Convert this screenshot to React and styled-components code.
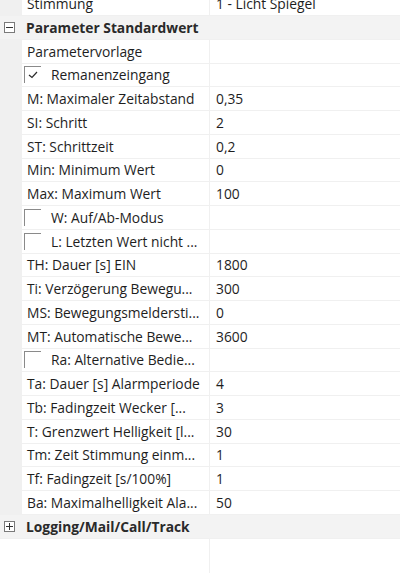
import React from 'react'
import styled, { createGlobalStyle } from 'styled-components'

const GlobalStyle = createGlobalStyle`
  html, body {
    margin: 0;
    padding: 0;
    background: #fff;
  }
  body {
    font-family: "Open Sans", "Noto Sans", sans-serif;
    font-size: 13.8px;
    color: #1e1e1e;
  }
`

const rows = [
  { name: 'Stimmung', value: '1 - Licht Spiegel' },
  { group: 'Parameter Standardwert', open: true },
  { name: 'Parametervorlage', value: '' },
  { name: 'Remanenzeingang', check: true, checked: true },
  { name: 'M: Maximaler Zeitabstand', value: '0,35' },
  { name: 'SI: Schritt', value: '2' },
  { name: 'ST: Schrittzeit', value: '0,2' },
  { name: 'Min: Minimum Wert', value: '0' },
  { name: 'Max: Maximum Wert', value: '100' },
  { name: 'W: Auf/Ab-Modus', check: true },
  { name: 'L: Letzten Wert nicht ...', check: true },
  { name: 'TH: Dauer [s] EIN', value: '1800' },
  { name: 'Ti: Verzögerung Bewegu...', value: '300' },
  { name: 'MS: Bewegungsmeldersti...', value: '0' },
  { name: 'MT: Automatische Bewe...', value: '3600' },
  { name: 'Ra: Alternative Bedie...', check: true },
  { name: 'Ta: Dauer [s] Alarmperiode', value: '4' },
  { name: 'Tb: Fadingzeit Wecker [...', value: '3' },
  { name: 'T: Grenzwert Helligkeit [l...', value: '30' },
  { name: 'Tm: Zeit Stimmung einm...', value: '1' },
  { name: 'Tf: Fadingzeit [s/100%]', value: '1' },
  { name: 'Ba: Maximalhelligkeit Ala...', value: '50' },
  { group: 'Logging/Mail/Call/Track', open: false },
]

const Grid = styled.div`
  display: flex;
  flex-direction: column;
  height: 573px;
  overflow: hidden;
`

// the list is scrolled a little: the first row is half hidden
const Scroller = styled.div`
  display: flex;
  flex-direction: column;
  flex: 1;
  margin-top: -7.75px;
`

const Row = styled.div`
  display: grid;
  grid-template-columns: 22px 188px 1fr;
  height: 23.75px;
  box-sizing: border-box;
  border-bottom: 1px solid #f0f0f0;
  background: #fff;
  flex-shrink: 0;
`

const Margin = styled.div`
  background: #f0f0f0;
`

const NameCell = styled.div`
  display: flex;
  align-items: center;
  border-right: 1px solid #f0f0f0;
  padding-left: ${({ $check }) => ($check ? '2px' : '5px')};
  white-space: nowrap;
  overflow: hidden;
`

const ValueCell = styled.div`
  display: flex;
  align-items: center;
  padding-left: 6px;
  white-space: nowrap;
  overflow: hidden;
`

const GroupRow = styled.div`
  display: flex;
  align-items: center;
  height: 23.75px;
  box-sizing: border-box;
  border-bottom: 1px solid #f0f0f0;
  background: #f3f3f3;
  font-weight: 700;
  color: #2a2a2a;
  flex-shrink: 0;
`

const Expander = styled.span`
  position: relative;
  box-sizing: border-box;
  width: 11px;
  height: 11px;
  margin: 0 11px 0 4px;
  border: 1px solid #7a7a7a;
  background: #fff;
  flex-shrink: 0;
  &::before,
  &::after {
    content: '';
    position: absolute;
    background: #333;
  }
  &::before {
    left: 1px;
    right: 1px;
    top: 4px;
    height: 1px;
  }
  &::after {
    display: ${({ $open }) => ($open ? 'none' : 'block')};
    top: 1px;
    bottom: 1px;
    left: 4px;
    width: 1px;
  }
`

const Box = styled.span`
  display: flex;
  align-items: center;
  justify-content: center;
  box-sizing: border-box;
  width: 17px;
  height: 17px;
  margin-right: 10px;
  border-top: 1px solid #8a8a8a;
  border-left: 1px solid #8a8a8a;
  flex-shrink: 0;
`

const Filler = styled.div`
  display: grid;
  grid-template-columns: 22px 188px 1fr;
  flex: 1;
`

const FillerName = styled.div`
  grid-column: 2;
  border-right: 1px solid #f0f0f0;
`

const Check = () => (
  <svg width="10" height="8" viewBox="0 0 10 8">
    <path d="M1 4 L4 6.5 L9 1" fill="none" stroke="#2a2a2a" strokeWidth="1.2" />
  </svg>
)

const App = () => (
  <>
    <GlobalStyle />
    <Grid>
      <Scroller>
        {rows.map((r, i) =>
          r.group ? (
            <GroupRow key={i}>
              <Expander $open={r.open} />
              {r.group}
            </GroupRow>
          ) : (
            <Row key={i}>
              <Margin />
              <NameCell $check={r.check}>
                {r.check && <Box>{r.checked && <Check />}</Box>}
                {r.name}
              </NameCell>
              <ValueCell>{r.value}</ValueCell>
            </Row>
          )
        )}
        <Filler>
          <FillerName />
        </Filler>
      </Scroller>
    </Grid>
  </>
)

export default App
